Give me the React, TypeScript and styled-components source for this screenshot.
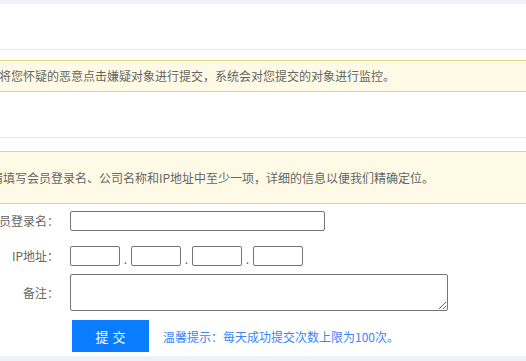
import styled, { createGlobalStyle } from "styled-components";

const GlobalStyle = createGlobalStyle`
  html, body {
    margin: 0;
    padding: 0;
    background: #f0f1f6;
    overflow: hidden;
  }
  body {
    font-family: "Microsoft YaHei", "Noto Sans CJK SC", "Noto Sans", sans-serif;
    font-size: 12px;
    color: #666;
  }
`;

const Panel = styled.div`
  margin: 4px 0 0 -40px;
  width: 640px;
  background: #fff;
`;

const Header = styled.div`
  height: 45px;
  border-bottom: 1px solid #e8e8e8;
`;

const Section = styled.div<{ $pt: number; $pb: number; $line?: boolean }>`
  padding-top: ${(p) => p.$pt}px;
  padding-bottom: ${(p) => p.$pb}px;
  border-bottom: ${(p) => (p.$line ? "1px solid #e8e8e8" : "none")};
`;

const Notice = styled.div<{ $h: number; $indent: number }>`
  height: ${(p) => p.$h}px;
  box-sizing: border-box;
  background: #fffae5;
  border-top: 1px solid #e8d67d;
  border-bottom: 1px solid #e8d67d;
  display: flex;
  align-items: center;
  padding-left: ${(p) => p.$indent}px;
  font-size: 12px;
  line-height: 16px;
  color: #666;
  white-space: nowrap;
`;

const Form = styled.div`
  padding: 7px 0 4px 0;
`;

const Row = styled.div<{ $mt: number }>`
  display: flex;
  align-items: center;
  margin-top: ${(p) => p.$mt}px;
`;

const Label = styled.div<{ $top?: boolean }>`
  width: 99px;
  margin-right: 11px;
  text-align: right;
  font-size: 12px;
  line-height: 16px;
  color: #666;
  white-space: nowrap;
`;

const TextInput = styled.input<{ $w: number }>`
  width: ${(p) => p.$w}px;
  height: 20px;
  box-sizing: border-box;
  border: 1px solid #767676;
  border-radius: 2px;
  padding: 1px 3px;
  font-size: 12px;
  outline: none;
`;

const IpDot = styled.span`
  width: 11px;
  text-align: center;
  align-self: flex-end;
  font-size: 12px;
  line-height: 14px;
  color: #666;
`;

const Remark = styled.textarea`
  width: 378px;
  height: 37px;
  box-sizing: border-box;
  border: 1px solid #767676;
  border-radius: 2px;
  padding: 2px 3px;
  font-size: 12px;
  outline: none;
  display: block;
`;

const Submit = styled.button`
  width: 77px;
  height: 32px;
  margin-left: 112px;
  border: none;
  border-radius: 0;
  background: #0a7dff;
  color: #fff;
  font-family: "Microsoft YaHei", "Noto Sans CJK SC", sans-serif;
  font-size: 13px;
  letter-spacing: 4px;
  padding: 0 0 0 4px;
  cursor: pointer;
`;

const Tip = styled.span`
  margin-left: 14px;
  font-size: 12px;
  color: #3c84f6;
  white-space: nowrap;
`;

export default function App() {
  return (
    <>
      <GlobalStyle />
      <Panel>
        <Header />
        <Section $pt={10} $pb={45} $line>
          <Notice $h={32} $indent={27}>
            请将您怀疑的恶意点击嫌疑对象进行提交，系统会对您提交的对象进行监控。
          </Notice>
        </Section>
        <Section $pt={13} $pb={0}>
          <Notice $h={53} $indent={31}>
            请填写会员登录名、公司名称和IP地址中至少一项，详细的信息以便我们精确定位。
          </Notice>
        </Section>
        <Form>
          <Row $mt={0}>
            <Label>会员登录名：</Label>
            <TextInput $w={255} />
          </Row>
          <Row $mt={15}>
            <Label>IP地址：</Label>
            <TextInput $w={50} />
            <IpDot>.</IpDot>
            <TextInput $w={50} />
            <IpDot>.</IpDot>
            <TextInput $w={50} />
            <IpDot>.</IpDot>
            <TextInput $w={50} />
          </Row>
          <Row $mt={8}>
            <Label>备注：</Label>
            <Remark />
          </Row>
          <Row $mt={9}>
            <Submit>提交</Submit>
            <Tip>温馨提示：每天成功提交次数上限为100次。</Tip>
          </Row>
        </Form>
      </Panel>
    </>
  );
}
